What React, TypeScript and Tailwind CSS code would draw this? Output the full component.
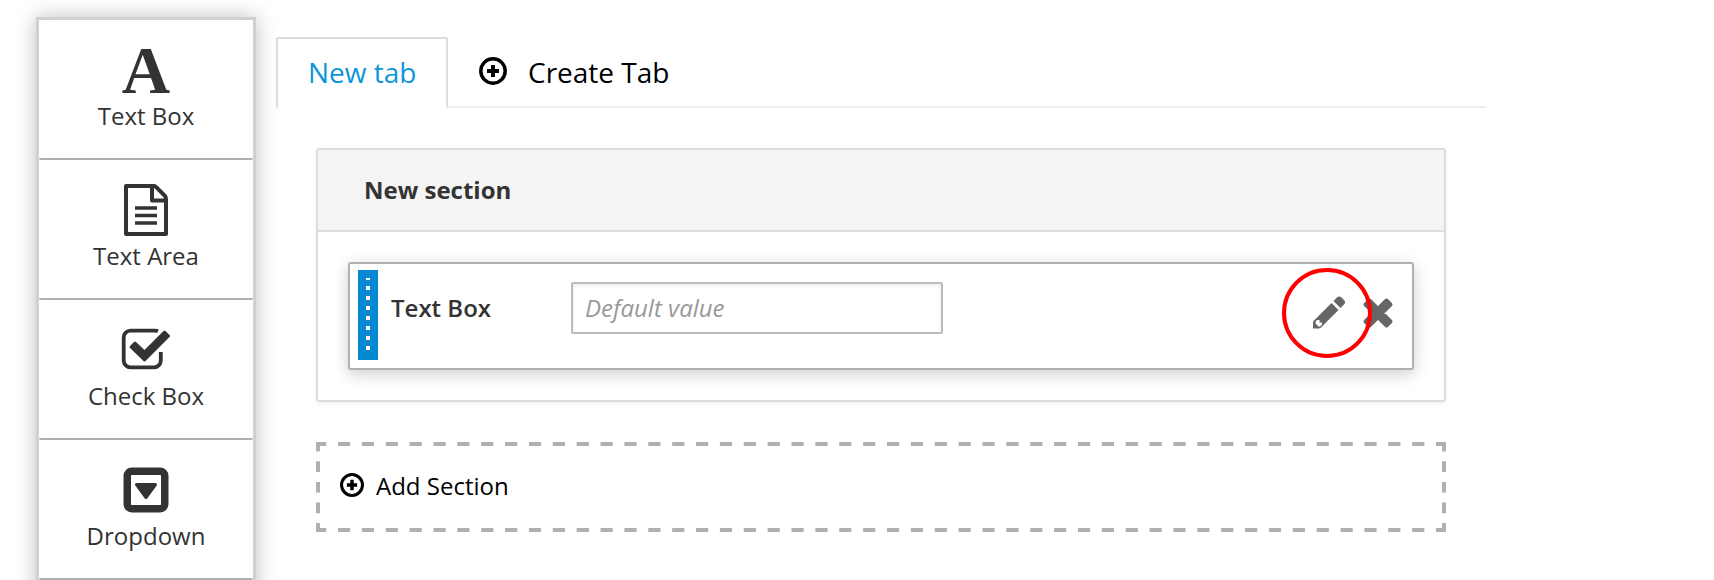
import React from "react";

function CirclePlus({ className }: { className: string }) {
  return (
    <svg viewBox="0 0 28 28" className={className} fill="none" stroke="currentColor">
      <circle cx="14" cy="14" r="12.200" strokeWidth="3.500" />
      <path d="M14 8v12M8 14h12" strokeWidth="4" />
    </svg>
  );
}

function FileIcon() {
  return (
    <svg width="46" height="54" viewBox="0 0 46 54" fill="none" stroke="currentColor" strokeWidth="4" strokeLinejoin="round">
      <path d="M3 3H31Q32.500 3.400 33.500 4.400L42 13Q43 14.200 43 16V51H3ZM29 3V17.500H43" />
      <path d="M12 25H34M12 32.500H34M12 40H34" strokeWidth="3.600" />
    </svg>
  );
}

function CheckIcon() {
  return (
    <svg className="mb-[3px]" width="50" height="42" viewBox="0 0 50 42" fill="none" stroke="currentColor">
      <path d="M37 3.300Q35.800 2.700 34 2.700H9.500A6.800 6.800 0 0 0 2.700 9.500V32.500A6.800 6.800 0 0 0 9.500 39.300H33A6.800 6.800 0 0 0 39.800 32.500V24" strokeWidth="3.800" />
      <path
        d="M9 18L13 14Q14 13.200 15 14L23.500 22L42.500 3Q43.500 2.300 44.500 3L48.500 7Q49.500 8 48.500 9L24.500 33Q23.500 34 22.500 33L9 20Q8 19 9 18Z"
        fill="currentColor"
        stroke="none"
      />
    </svg>
  );
}

function DropdownIcon() {
  return (
    <svg width="46" height="46" viewBox="0 0 46 46" fill="currentColor">
      <rect x="4.250" y="4.250" width="37.500" height="37.500" rx="4.500" fill="none" stroke="currentColor" strokeWidth="7.500" />
      <path d="M13.500 17.500H32.500L23 30.500Z" stroke="currentColor" strokeWidth="3" strokeLinejoin="round" />
    </svg>
  );
}

const tools = [
  { label: "Text Box", icon: <span className="font-['Liberation_Serif',serif] text-[67px] font-bold leading-[46px]">A</span> },
  { label: "Text Area", icon: <FileIcon /> },
  { label: "Check Box", icon: <CheckIcon /> },
  { label: "Dropdown", icon: <DropdownIcon /> },
];

export default function App() {
  return (
    <div className="flex h-[580px] w-[1714px] items-start overflow-hidden bg-white pl-9 pt-[17px] font-['Open_Sans',sans-serif] text-[#333]">
      <aside className="h-[600px] w-[220px] shrink-0 border-[3px] border-[#d0d0d0] bg-white shadow-[0_0_20px_rgba(0,0,0,0.25)]">
        {tools.map((t) => (
          <div key={t.label} className="flex h-[140px] flex-col items-center rounded-[2px] border-b-2 border-[#b0b0b0]">
            <div className="flex h-[80px] items-center pt-5">{t.icon}</div>
            <div className="-mt-px text-[24px] leading-[34px]">{t.label}</div>
          </div>
        ))}
      </aside>
      <main className="ml-5 mt-5 w-[1210px]">
        <nav className="flex h-[71px]">
          <div className="w-[172px] rounded-[2px] border-2 border-b-0 border-[#ddd] pl-[30px] pt-3 text-[28px] leading-[42px] text-[#0d96d9]">New tab</div>
          <div className="flex flex-1 border-b-2 border-[#eee] pl-[31px] pt-[14px] text-[28px] leading-[42px] text-black">
            <CirclePlus className="mt-[6px] h-7 w-7" />
            <span className="ml-[21px]">Create Tab</span>
          </div>
        </nav>
        <section className="ml-10 mt-10 h-[254px] w-[1130px] rounded-[3px] border-2 border-[#ddd] shadow-[0_2px_4px_rgba(0,0,0,0.06)]">
          <h2 className="h-[82px] border-b-2 border-[#ddd] bg-[#f4f4f4] pl-[46px] pt-[22px] text-[24px] font-bold leading-[36px]">New section</h2>
          <div className="mx-[30px] mt-[30px] flex h-[108px] rounded-[3px] border-2 border-[#b0b0b0] bg-white pl-2 shadow-[0_4px_16px_rgba(0,0,0,0.2)]">
            <div className="mt-[6px] flex h-[90px] w-5 flex-col items-center gap-[6px] bg-[#0488d2] pt-2">
              <i className="h-[2px] w-1 bg-white" />
              {[1, 2, 3, 4, 5, 6, 7].map((n) => (
                <i key={n} className="h-1 w-1 bg-white" />
              ))}
            </div>
            <label className="ml-[13px] mt-[26px] w-[180px] text-[24px] font-semibold leading-[36px]">Text Box</label>
            <div className="mt-[18px] h-[52px] w-[372px] rounded-[2px] border-2 border-[#bbb] pl-3 pt-[6px] text-[24px] italic leading-[36px] text-[#999] shadow-[inset_0_2px_4px_rgba(0,0,0,0.08)]">Default value</div>
            <div className="relative ml-[370px] mt-[32px] flex h-8 text-[#666]">
              <svg width="33" height="33" viewBox="0 0 33 33" fill="currentColor">
                <path fillRule="evenodd" d="M18.500 7L25.500 14L8 31.500Q7 32.500 5.500 32.500H0V26.500Q0 25.500 1 24.500ZM4 24L2.500 26V27.500L5.500 30.500H7L9 28.500V26.500H6.500V24Z" />
                <path d="M20.500 5L24 1.500Q26 -.5 28.500 1.500L31 4Q33 6.200 31 8.500L27.500 12Z" />
              </svg>
              <svg className="ml-[16px] mt-px" width="32" height="32" viewBox="0 0 32 32" fill="currentColor" stroke="currentColor" strokeWidth="4" strokeLinejoin="round">
                <path d="M7.500 3.500L16 12L24.500 3.500L28.500 7.500L20 16L28.500 24.500L24.500 28.500L16 20L7.500 28.500L3.500 24.500L12 16L3.500 7.500Z" />
              </svg>
              <div className="absolute -left-[31px] -top-7 h-[90px] w-[90px] rounded-full border-4 border-[#f00]" />
            </div>
          </div>
        </section>
        <div className="relative ml-10 mt-10 flex h-[90px] w-[1130px] items-start pl-6 pt-[26px] text-[24px] leading-[36px] text-black">
          <svg className="absolute inset-0" width="1130" height="90" fill="none" stroke="#b0b0b0" strokeWidth="4">
            <path d="M0 2H1130M0 88H1130" strokeDasharray="12.200 11.670" strokeDashoffset="1.900" />
            <path d="M2 0V90M1128 0V90" strokeDasharray="10.700 9.850" strokeDashoffset="1.200" />
          </svg>
          <CirclePlus className="mt-[5px] h-6 w-6" />
          <span className="ml-3">Add Section</span>
        </div>
      </main>
    </div>
  );
}
